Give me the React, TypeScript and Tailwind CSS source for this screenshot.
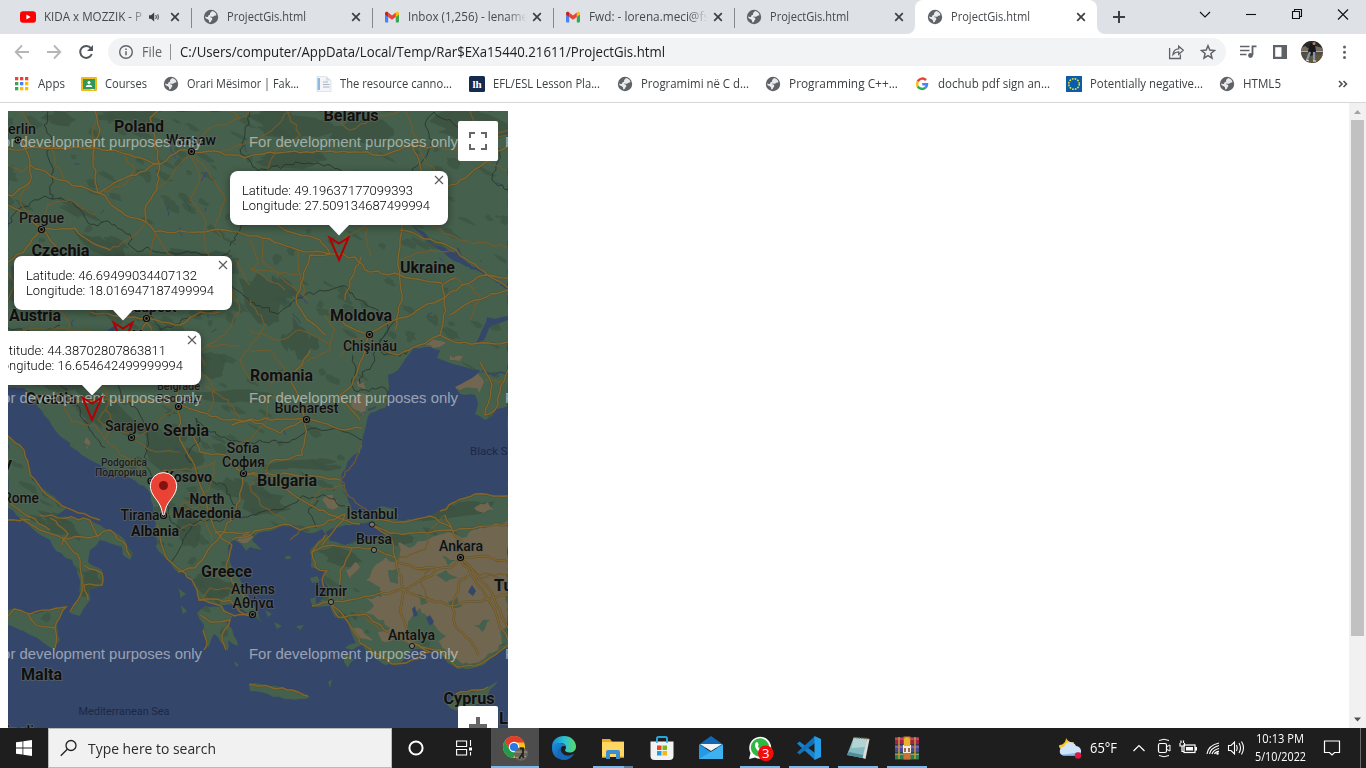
import React from 'react';

const UI = "font-['Open_Sans','Noto_Sans',sans-serif]";

/* ---------- small helpers ---------- */

function Fit({ w, children, className = '' }: { w: number; children: string; className?: string }) {
  // One line of text scaled horizontally to a known advance width
  const ref = React.useRef<HTMLSpanElement>(null);
  const [s, setS] = React.useState(1);
  React.useLayoutEffect(() => {
    const el = ref.current;
    if (el && el.offsetWidth) setS(w / el.getBoundingClientRect().width);
  }, []);
  return (
    <span className={`block shrink-0 ${className}`} style={{ width: w }}>
      <span ref={ref} className="inline-block origin-left whitespace-pre" style={{ transform: `scaleX(${s})` }}>{children}</span>
    </span>
  );
}

const Globe = () => (
  <svg viewBox="0 0 16 16" className="size-4 shrink-0">
    <circle cx="8" cy="8" r="7.2" fill="#5f6368" />
    <path d="M8.8 1.9c1.6.2 3.2 1.1 4.1 2.5.4.8.6 1.4.4 1.8-.7.1-1 .7-1.9.5-.7-.1-.6.9-1.3 1.1-.8.2-1.6-.5-2.5-.4-.6.2-.3.9.4 1 .9 0 1.400.7 1.300 1.700-.2 1-1 1.300-1.200 2.200-.1.700-.9 1.300-1.500 1.200-.8-.5-.3-1.700-.9-2.500-.6-.8-2.200-.9-2.900-1.700-.5-.6-.9-1.100-.9-1.700 1 .4 1.900.7 2.800.3.8-.4.300-1.200 1.100-1.600.9-.4 1.500-.7 1.300-1.500-.2-.9.400-1.300.900-1.600.5-.3.500-.8.800-1.300z" fill="#e9eaec" />
  </svg>
);

const Gmail = () => (
  <svg viewBox="0 0 16 16" className="size-4 shrink-0">
    <path d="M1 4.500v8.100c0 .5.400.900.900.900h2.300V7.500z" fill="#4285f4" />
    <path d="M15 4.500v8.100c0 .5-.4.900-.9.900h-2.300V7.500z" fill="#34a853" />
    <path d="M11.800 4v4L15 5.600V4.400c0-1.500-1.600-2.100-2.600-1.300z" fill="#fbbc04" />
    <path d="M4.200 8V3.600L8 6.400l3.800-2.800V8L8 10.800z" fill="#ea4335" />
    <path d="M1 4.400v1.200L4.200 8V3.600l-.6-.5C2.600 2.300 1 2.900 1 4.400z" fill="#c5221f" />
  </svg>
);

const Youtube = () => (
  <svg viewBox="0 0 16 16" className="size-4 shrink-0">
    <rect x="0" y="2.300" width="16" height="11.400" rx="3" fill="#f00" />
    <path d="M6.400 5.600v4.800L10.600 8z" fill="#fff" />
  </svg>
);

const Cross = () => (
  <svg viewBox="0 0 16 16" className="size-4 shrink-0">
    <path d="M4.200 4.200l7.600 7.600M11.800 4.200l-7.600 7.600" stroke="#3c4043" strokeWidth="1.700" />
  </svg>
);

const Speaker = () => (
  <svg viewBox="0 0 16 16" className="size-4 shrink-0">
    <path d="M3 6.300h2L8.200 3.500v9L5 9.700H3z" fill="#3c4043" />
    <path d="M9.800 6q1 2 0 4M11.800 5.300q1 2.700 0 5.400" fill="none" stroke="#3c4043" strokeWidth="1" />
  </svg>
);

/* ---------- browser chrome ---------- */

type TabInfo = { icon: React.ReactNode; title: string; w: number; fade?: boolean; sound?: boolean; active?: boolean; sep?: boolean };

const tabs: TabInfo[] = [
  { icon: <Youtube />, title: 'KIDA x MOZZIK - P', w: 98, fade: true, sound: true, sep: true },
  { icon: <Globe />, title: 'ProjectGis.html', w: 79, sep: true },
  { icon: <Gmail />, title: 'Inbox (1,256) - lename', w: 120, fade: true, sep: true },
  { icon: <Gmail />, title: 'Fwd: - lorena.meci@fs', w: 120, fade: true, sep: true },
  { icon: <Globe />, title: 'ProjectGis.html', w: 79 },
  { icon: <Globe />, title: 'ProjectGis.html', w: 79, active: true },
];

function Tab({ t }: { t: TabInfo }) {
  return (
    <div className={`relative flex h-[34px] shrink-0 items-center pl-3 ${t.sound ? 'w-[182.600px]' : t.active ? 'w-[182px]' : 'w-[181.100px]'} ${t.active ? 'rounded-t-lg bg-white' : ''}`}>
      {t.icon}
      <div className={`ml-2 flex min-w-0 flex-1 overflow-hidden ${t.fade ? (t.sound ? '[mask-image:linear-gradient(to_right,#000_82%,transparent_105%)]' : '[mask-image:linear-gradient(to_right,#000_82%,transparent_98%)]') : ''}`}>
        <Fit w={t.w} className="text-[12px] leading-4 text-[#45494d]">{t.title}</Fit>
      </div>
      {t.sound && <Speaker />}
      <div className={t.sound ? 'mr-[7.500px] ml-[5px]' : 'mr-[7.500px]'}><Cross /></div>
      {t.sep && <div className="absolute top-2 -right-px h-5 w-px bg-[#85888c]" />}
      {t.active && (
        <>
          <svg viewBox="0 0 8 8" className="absolute bottom-0 -left-2 size-2"><path d="M8 0v8H0a8 8 0 0 0 8-8z" fill="#fff" /></svg>
          <svg viewBox="0 0 8 8" className="absolute -right-2 bottom-0 size-2"><path d="M0 0v8h8a8 8 0 0 1-8-8z" fill="#fff" /></svg>
        </>
      )}
    </div>
  );
}

function TabStrip() {
  return (
    <div className="flex h-[34px] bg-[#dee1e6] pl-2">
      {tabs.map((t, i) => <Tab key={i} t={t} />)}
      <svg viewBox="0 0 28 34" className="ml-2 h-[34px] w-7"><path d="M14 11v12M8 17h12" stroke="#3c4043" strokeWidth="2" /></svg>
      <div className="flex-1" />
      <svg viewBox="0 0 184 34" className="h-[34px] w-[184px] shrink-0" fill="none" stroke="#111" strokeWidth="1.100">
        <path d="M18 12l5 5 5-5" />
        <path d="M64 14.500h10" />
        <path d="M110.500 11.500h7v7h-7zM112.500 11.500v-2h7v7h-2" />
        <path d="M156 9.500l10 10M166 9.500l-10 10" />
      </svg>
    </div>
  );
}

function Toolbar() {
  return (
    <div className="flex h-9 items-center bg-white">
      <svg viewBox="0 0 108 36" className="h-9 w-[108px] shrink-0" fill="none" stroke="#b4b6b8" strokeWidth="1.800">
        <path d="M29 18H16M22 11.500L15.700 18l6.300 6.500M47 18h13M54 11.500l6.300 6.500-6.300 6.500" />
        <path d="M91 14.300A6 6 0 1 0 91.800 20" stroke="#53575b" strokeWidth="2" />
        <path d="M93 11v6h-6z" fill="#53575b" stroke="none" />
      </svg>
      <div className="flex h-7 w-[1118px] items-center rounded-full bg-[#f1f3f4] pl-2.5">
        <svg viewBox="0 0 16 16" className="size-4"><circle cx="8" cy="8" r="6.300" fill="none" stroke="#5f6368" strokeWidth="1.400" /><path d="M8 7.200v4M8 4.600v1.500" stroke="#5f6368" strokeWidth="1.500" /></svg>
        <Fit w={20} className="ml-2 text-[14px] leading-5 text-[#5f6368]">File</Fit>
        <div className="mr-[9px] ml-2 h-4 w-px bg-[#8f9398]" />
        <Fit w={485} className="text-[14px] leading-5 text-[#202124]">C:/Users/computer/AppData/Local/Temp/Rar$EXa15440.21611/ProjectGis.html</Fit>
        <div className="flex-1" />
        <svg viewBox="0 0 60 28" className="h-7 w-[60px]" fill="none" stroke="#5f6368" strokeWidth="1.300">
          <path d="M3.600 10v10.500h10.800v-4" />
          <path d="M7 16.500c.4-3.800 2.600-5.600 5.700-5.700V8.200l4.600 4.100-4.600 4.100v-2.600c-2.300 0-4 .8-5.700 2.700z" />
          <path d="M42 7.800l1.800 4.300 4.700.4-3.600 3 1.100 4.600-4-2.500-4 2.500 1.100-4.600-3.600-3 4.700-.4z" strokeWidth="1.500" />
        </svg>
      </div>
      <svg viewBox="0 0 140 36" className="h-9 w-[140px] shrink-0">
        <path d="M14 12.500h9.500M14 16.500h9.500M14 20.500h6.500" stroke="#5f6368" strokeWidth="1.700" />
        <path d="M26.500 11.500v9.500M26.500 12.300h4" stroke="#5f6368" strokeWidth="1.800" />
        <circle cx="24.500" cy="21.500" r="2.400" fill="#5f6368" />
        <path d="M47 11h14v14H47zM49.200 13.200v9.600h6.300v-9.600z" fill="#5f6368" fillRule="evenodd" />
        <defs><clipPath id="av"><circle cx="86" cy="18" r="11" /></clipPath></defs>
        <g clipPath="url(#av)">
          <rect x="75" y="7" width="22" height="22" fill="#514c45" />
          <path d="M75 7h22v7H75z" fill="#2b2927" />
          <path d="M75 14l4-2 4 3 6-3 8 2v3H75z" fill="#726c62" />
          <path d="M75 17.500h22" stroke="#a7abb1" />
          <path d="M75 20l7 2-3 4 8 3h10v-8z" fill="#635639" />
          <path d="M84 11c0-3 5-3 5 0l1 6-2 4-5 1-1-5z" fill="#191718" />
          <circle cx="88" cy="9.500" r="1.500" fill="#b68368" />
          <path d="M84 18l-3 8M88 18v9" stroke="#8197b1" strokeWidth="2.200" />
          <path d="M80 26l3 1M87 27h3" stroke="#eee" />
        </g>
        <g fill="#5f6368"><circle cx="118.500" cy="13" r="1.500" /><circle cx="118.500" cy="18.200" r="1.500" /><circle cx="118.500" cy="23.400" r="1.500" /></g>
      </svg>
    </div>
  );
}

const AppsGrid = () => (
  <svg viewBox="0 0 16 16" className="size-4 shrink-0">
    {['#ea4335', '#ea4335', '#ea4335', '#34a853', '#4285f4', '#fbbc04', '#34a853', '#fbbc04', '#fbbc04'].map((c, i) => (
      <rect key={i} x={1 + (i % 3) * 5} y={1 + Math.floor(i / 3) * 5} width="3.300" height="3.300" fill={c} />
    ))}
  </svg>
);
const Classroom = () => (
  <svg viewBox="0 0 16 16" className="size-4 shrink-0">
    <rect y="1" width="16" height="14" rx="1" fill="#f5b912" />
    <rect x="2" y="3" width="12" height="10" fill="#2f9858" />
    <circle cx="8" cy="6.500" r="1.500" fill="#fff" /><path d="M4.800 11c0-3 6.400-3 6.400 0z" fill="#fff" />
    <path d="M9.500 13h3.500v1H9.500z" fill="#eee" />
  </svg>
);
const Doc = () => (
  <svg viewBox="0 0 16 16" className="size-4 shrink-0">
    <path d="M1 .5h9l5 4V15.500H1z" fill="#f3f5f8" stroke="#d6dae1" strokeWidth=".7" />
    <path d="M1.500 2h2.500v12H1.500z" fill="#8fb8e0" /><path d="M7 6h5M7 8.500h6.500M7 11h6.500" stroke="#a8b3c2" /><path d="M10 .5v4h5z" fill="#d9dee6" />
  </svg>
);
const Lh = () => (
  <svg viewBox="0 0 16 16" className="size-4 shrink-0">
    <rect width="16" height="16" rx="1.500" fill="#16294f" />
    <text x="8" y="12" textAnchor="middle" fontFamily="Liberation Serif, serif" fontWeight="700" fontSize="11" fill="#fff">lh</text>
  </svg>
);
const GoogleG = () => (
  <svg viewBox="0 0 16 16" className="size-4 shrink-0" fill="none" strokeWidth="2.500">
    <path d="M12 4.200A5 5 0 0 0 3.700 5.600" stroke="#ea4335" /><path d="M3.700 5.600a5 5 0 0 0 0 4.800" stroke="#fbbc04" />
    <path d="M3.700 10.400A5 5 0 0 0 11.400 11.600" stroke="#34a853" /><path d="M11.400 11.600A5 5 0 0 0 13 8.200H8.200" stroke="#4285f4" />
  </svg>
);
const EU = () => (
  <svg viewBox="0 0 16 16" className="size-4 shrink-0">
    <rect width="16" height="16" fill="#0b5cab" /><circle cx="8" cy="8" r="5.300" fill="none" stroke="#f0e52a" strokeWidth="1.500" strokeDasharray="1.700 1.075" />
  </svg>
);

const bookmarks: { icon: React.ReactNode; t: string; w: number; box: number }[] = [
  { icon: <AppsGrid />, t: 'Apps', w: 27, box: 67 },
  { icon: <Classroom />, t: 'Courses', w: 42, box: 82 },
  { icon: <Globe />, t: 'Orari Mësimor | Fak...', w: 112, box: 153 },
  { icon: <Doc />, t: 'The resource canno...', w: 112, box: 153 },
  { icon: <Lh />, t: 'EFL/ESL Lesson Pla...', w: 107, box: 148 },
  { icon: <Globe />, t: 'Programimi në C d...', w: 108, box: 148 },
  { icon: <Globe />, t: 'Programming C++...', w: 109, box: 149 },
  { icon: <GoogleG />, t: 'dochub pdf sign an...', w: 112, box: 152 },
  { icon: <EU />, t: 'Potentially negative...', w: 113, box: 153 },
  { icon: <Globe />, t: 'HTML5', w: 38, box: 80 },
];

function Bookmarks() {
  return (
    <div className="flex h-[33px] items-center border-b border-[#d5d7da] bg-white pb-1 pl-3.5">
      {bookmarks.map((b, i) => (
        <div key={i} className="flex shrink-0 items-center gap-2" style={{ width: b.box }}>
          {b.icon}
          <Fit w={b.w} className="text-[12px] leading-4 text-[#3c4043]">{b.t}</Fit>
        </div>
      ))}
      <div className="flex-1" />
      <svg viewBox="0 0 12 12" className="mr-[17px] size-3"><path d="M2 3l3 3-3 3M6.500 3l3 3-3 3" fill="none" stroke="#4c5054" strokeWidth="1.600" /></svg>
    </div>
  );
}

/* ---------- map ---------- */

let seed = 11;
const rnd = () => {
  seed = (seed * 16807) % 2147483647;
  return seed / 2147483647;
};

// Turns "x,y x,y" into a polyline with small natural wiggles
function wiggle(src: string, amp = 1.600, step = 9, close = false) {
  const p = src.trim().split(/\s+/).map((q) => q.split(',').map(Number));
  if (close) p.push(p[0]);
  let d = `M${p[0][0]} ${p[0][1]}`;
  for (let i = 1; i < p.length; i++) {
    const [x0, y0] = p[i - 1];
    const [x1, y1] = p[i];
    const n = Math.max(1, Math.round(Math.hypot(x1 - x0, y1 - y0) / step));
    for (let k = 1; k <= n; k++) {
      const j = k === n ? 0 : amp;
      d += `L${(x0 + ((x1 - x0) * k) / n + (rnd() - 0.5) * 2 * j).toFixed(1)} ${(y0 + ((y1 - y0) * k) / n + (rnd() - 0.5) * 2 * j).toFixed(1)}`;
    }
  }
  return d + (close ? 'Z' : '');
}

const landShapes = [
  // mainland with the Balkans, Thrace and Anatolia
  '8,111 508,111 508,648 495,653 485,664 468,669 458,669 448,663 440,655 428,648 412,650 400,664 385,665 372,655 362,645 352,650 345,648 356,643 352,635 345,620 335,617 330,606 312,606 320,602 330,590 322,578 327,571 311,567 310,550 318,541 326,535 322,529 313,533 306,533 294,525 282,526 270,531 258,533 252,540 262,550 250,547 246,551 240,543 234,540 228,548 230,562 236,576 246,588 250,600 258,612 261,622 252,616 246,612 236,606 225,605 210,604 198,598 195,588 190,577 176,571 166,559 156,547 155,520 153,505 148,490 130,478 105,468 82,455 60,436 44,415 36,402 24,388 8,388',
  // Peloponnese
  '197,613 205,606 222,607 233,617 226,622 232,629 238,646 228,640 228,651 218,637 214,634 208,648 203,633 204,625',
  // Italy
  '8,436 20,445 28,460 32,480 45,490 58,500 66,509 54,516 90,520 110,530 125,540 133,553 130,560 123,555 122,547 100,540 90,550 88,562 102,570 103,585 90,590 90,600 80,616 70,613 80,595 80,580 72,560 56,551 50,540 35,531 20,518 8,508',
  // Sicily
  '8,610 15,608 28,614 45,611 66,606 57,625 60,640 55,650 40,640 20,630 8,625',
  // Crete
  '249,683 262,684 280,687 300,692 310,697 300,699 285,699 268,694 250,691',
  // Cyprus
  '446,703 457,693 472,692 486,688 498,681 488,695 478,704 462,711 450,708',
  // Aegean islands
  '236,598 246,600 256,608 249,609 240,604', '286,556 291,556 290,559 285,559', '310,578 317,576 320,581 312,583', '310,599 316,597 316,607 312,605', '265,610 272,614 268,617', '274,622 282,626 277,629', '296,626 304,625 300,630', '345,653 354,660 348,668 344,662', '328,682 332,679 330,688', '178,588 186,594 180,598', '189,572 195,578 190,580', '181,605 187,611 183,614', '331,535 339,532 338,536', '234,661 239,665 236,667',
];

const waterShapes = [
  '414,348 425,347 440,350 437,358 450,363 465,367 480,370 472,378 455,387 460,394 475,395 478,405 475,414 485,420 493,416 496,409 508,406 508,496 475,494 462,498 448,506 430,516 415,520 395,520 375,519 352,512 348,500 341,479 347,463 362,448 365,430 370,413 385,408 389,400 388,375 398,370 406,358',
  '476,343 481,332 486,322 487,317 495,319 508,316 508,320 497,324 490,326 484,340',
  '326,532 340,527 357,523 370,522 384,530 385,535 372,540 357,541 345,545 330,541',
  '437,245 448,250 456,252 458,247 461,257 472,266 467,267 454,261 443,252',
  '468,265 480,268 490,276 500,283 497,283 482,273 470,269',
  '412,225 424,232 430,239 424,237 414,228',
  '468,592 472,585 476,591 473,596', '412,609 415,606 418,615 414,617', '426,618 430,615 434,622 430,626',
  '106,332 116,325 117,327 108,335',
];

const sand = [
  '372,570 386,557 394,562 400,553 398,543 410,548 424,541 432,537 448,532 462,538 472,530 490,526 508,520 508,642 498,650 482,660 470,664 458,660 446,650 440,643 425,640 410,644 398,637 386,642 378,632 390,628 384,620 365,613 374,606 366,598 382,597 376,585 366,580',
  '346,570 356,562 360,567 350,578', '350,625 362,629 373,640 360,638', '425,345 433,339 446,343 440,347', '450,355 463,356 460,361 450,360', '452,388 468,378 478,374 484,382 479,393 472,388 460,390',
  '352,400 362,393 367,400 362,416 354,409', '356,380 365,382 366,390 358,387', '322,500 333,495 338,507 328,508', '238,537 246,531 254,537 247,543 238,541', '86,437 90,445 87,449', '474,508 488,502 494,510 484,513',
];

// greener patches inside the dry plateau
const oases = ['408,622 420,608 432,622 446,636 438,642 420,640 408,634', '436,575 446,570 458,578 446,582', '388,570 400,568 398,584 390,582', '474,625 490,620 482,632', '442,556 456,560 448,566', '448,602 458,598 462,606 452,608', '500,632 508,626 508,642 502,644', '418,594 428,603 421,605'];

const borders = [
  '48,111 44,125 52,138 47,155 53,172 50,190 52,200', '8,224 20,208 38,200 45,196 54,199 72,201 78,208 84,216 88,223 98,226 108,221 122,230 132,239 128,244 138,252 148,247 156,252', '156,252 175,254 195,252 215,258 230,250', '230,246 240,230 250,216', '250,111 244,140 240,150 258,171 300,163 330,165 342,171',
  '412,171 425,158 432,140 425,125 434,112 455,125 470,128 480,140 500,150 496,170 492,180 508,190', '150,310 160,330 190,318 215,310 232,286 250,302 278,314 298,298 320,290 345,286 360,300 378,310 388,330 375,350 372,365 362,372 360,384', '352,355 356,370 352,385 358,392 385,388 388,398', '60,385 75,398 80,415 100,442 105,448', '118,385 122,400 138,410 148,440 145,465', '196,418 210,432 240,442 290,442 308,430 340,430 362,440', '196,418 200,440 186,455 200,478 225,485 238,510 232,520', '180,548 190,530 200,520 232,520 255,515 290,505 300,498 325,495 345,506', '172,563 178,552 180,548', '318,500 308,512 316,528', '8,328 40,334 60,325', '395,320 380,340 384,355 400,356 408,350', '145,465 155,480 165,500 170,520 185,530',
];

const mainRoads = [
  '8,149 60,148 110,150 135,157 160,164 180,150 191,152 220,152 245,158 270,152 330,151 355,152 385,155 410,145 432,147',
  '158,111 150,118 155,140 159,163 157,190 146,205 146,222 155,232 205,232 225,230 250,236 262,238 298,250 330,254',
  '30,165 60,180 99,193 125,215 146,222', '22,140 30,165 30,182 12,196 8,195', '8,262 14,258 30,244 41,229 75,228 88,240 110,250',
  '41,229 25,212 8,205', '41,229 50,240 60,250', '99,193 120,180 140,172 159,163', '95,111 100,130 94,142 93,160 98,193',
  '146,318 120,316 90,312', '146,318 180,325 200,312 220,312', '146,318 158,345 178,380 178,405', '146,318 140,340 105,370', '178,405 200,412 228,420 306,419',
  '178,405 180,440 196,470 205,500 215,530 232,545', '306,419 345,430 362,428', '306,419 304,445 302,455 270,462', '306,419 298,395 290,380 302,365 310,350', '306,419 280,433 250,420 232,425',
  '243,473 270,478 310,505 335,516 360,524', '243,473 225,455 200,452 190,430', '243,473 240,500 230,520', '243,473 290,474 340,480', '369,334 375,345 398,355 410,350', '369,334 345,325 330,308', '369,334 352,385 340,395 360,420', '369,334 400,318 440,300 462,285 485,275 508,278',
  '408,351 440,335 460,343 495,344 508,342', '440,335 446,310 442,285 455,278', '330,254 310,255 296,300 304,315 325,335', '330,254 355,257 365,270 400,275 442,283',
  '361,257 350,280 345,300', '450,315 475,300 508,290', '508,288 470,262 450,247 430,239 400,230', '445,188 460,180 490,160 508,145', '412,145 425,180 430,195', '262,218 290,232 320,240 330,254', '402,225 398,260 402,295 395,330',
  '480,362 492,385 485,415 495,410 500,392 508,370',
  '157,525 165,555 180,570 192,580 200,600 215,604', '232,520 212,545 195,568 178,572', '232,545 226,570 238,590 250,605', '232,540 260,530 285,524 300,530 325,524 345,514', '215,533 250,532',
  '215,604 235,616 250,613', '200,615 210,622 230,620 222,635 226,650', '203,630 207,645 204,650', '252,616 240,612 230,600 198,600',
  '8,436 24,450 30,475 42,490 62,506 100,520', '20,518 40,530 62,538 80,560 82,585 78,600 70,612', '62,538 88,538 110,530 126,545 130,556', '50,518 68,534 62,545', '84,565 102,573 102,585 84,585 88,600', '40,515 90,520 98,538', '8,500 28,516 50,530', '8,616 14,609 30,614 50,610 66,607 55,628 55,648', '28,614 36,625 55,628', '8,520 30,520',
  '371,524 390,533 410,533 450,530 508,524', '371,525 392,540 396,560 415,568 450,568 460,558', '325,535 312,552 326,546 352,548 374,549 395,558', '312,552 315,567 327,571 322,580 331,602', '331,602 312,606', '331,602 370,596 405,590 440,568', '331,602 338,617 365,614 384,630 408,641', '331,602 348,622 360,643 378,654 392,664 406,663 430,652 412,643 440,650 457,667 480,664 508,645', '352,548 340,570 342,600',
  '396,560 404,590 400,610 412,642', '404,590 430,600 452,606 508,595', '460,558 475,580 495,610 500,628 508,640', '460,558 490,590 504,620 508,628', '460,558 480,556 508,562', '452,606 455,625 470,640 478,655', '452,606 460,580 468,575', '460,558 465,545 452,530 445,515', '440,511 455,502 475,494 508,496', '375,520 405,522 430,516 452,528',
  '249,685 270,687 298,692 308,696', '456,694 478,690 488,687', '345,514 338,525 322,545',
];

const minorRoads = [
  '98,111 92,132 95,160', '120,150 135,170 125,185 99,193', '191,152 200,180 190,200 205,220 203,232 210,260', '191,152 215,180 225,200 215,225 222,240', '191,152 175,170 155,192', '191,152 210,128 240,118 250,111', '220,152 260,140 290,112', '287,111 300,135 275,150 268,170', '330,111 350,130 370,120 400,111', '405,111 415,135 425,160 440,180', '432,147 460,150 508,135', '262,238 262,260 290,285 310,300',
  '298,250 300,280 306,298', '250,240 258,262 252,270 285,290', '250,268 300,275', '342,240 365,225 370,256', '400,225 430,225 460,240 508,247', '398,260 430,250 455,252', '455,278 480,295 470,320', '250,330 280,340 300,330 330,345', '250,352 270,350 285,370 270,385', '250,300 265,325 250,345 240,360 250,380', '232,290 240,310 225,335 200,350 205,365', '300,365 330,350 335,330 325,315',
  '250,402 270,395 290,400', '265,395 268,420 250,440 232,450', '270,462 265,475 250,485 260,505 285,520', '200,370 215,390 208,412', '205,345 240,345', '205,385 228,400 240,420', '55,392 65,410 72,422 95,425 110,445 145,470', '100,385 110,400 98,420 110,430 104,440', '60,400 85,402 130,400 178,405', '131,437 115,425 106,410', '131,437 150,430 165,415 178,405', '131,437 150,450 180,452', '150,481 165,470 190,470', '190,470 215,462 210,485 200,500 180,505', '163,515 180,512 200,505 220,512', '212,540 205,520 180,530', '200,600 210,588 225,588 238,592', '238,592 225,600',
  '8,272 14,285 8,300', '8,340 30,328 90,330', '60,310 70,325 60,345', '8,165 22,172 30,165', '52,148 55,165 75,190', '30,182 20,200 41,229', '41,229 48,205 70,200 95,215', '110,250 135,235 146,222', '155,232 150,260 140,280 146,318', '155,232 170,255 190,265 220,260', '210,260 225,280 212,300 200,312', '236,260 250,285',
  '445,515 430,530 425,550 396,560', '508,575 480,575 460,558', '430,600 420,580 430,570 415,568', '384,630 370,622 360,610', '475,580 490,575 508,585', '300,530 290,540', '340,480 355,462 362,445', '340,480 350,497 372,515', '310,505 320,490 345,485', '485,380 508,382', '340,356 350,340 369,334', '240,118 230,111', '20,111 30,125 22,140', '22,140 45,148 60,148', '470,111 480,135 508,130', '478,153 492,165 508,170',
];

const labels: { t: string; x: number; y: number; w: number; s: number; b?: boolean; a?: 'start' }[] = [
  { t: 'Poland', x: 139, y: 131.500, w: 50, s: 16, b: true }, { t: 'Belarus', x: 351, y: 120.500, w: 55, s: 16, b: true }, { t: 'Warsaw', x: 191, y: 145, w: 50, s: 14 },
  { t: 'Berlin', x: 17.500, y: 134, w: 37, s: 14 }, { t: 'Prague', x: 41.500, y: 223, w: 45, s: 14 }, { t: 'Czechia', x: 60.500, y: 255.500, w: 58, s: 16, b: true },
  { t: 'Ukraine', x: 427.500, y: 272.500, w: 55, s: 16, b: true }, { t: 'Austria', x: 35, y: 320.500, w: 52, s: 16, b: true }, { t: 'Budapest', x: 146.500, y: 312, w: 60, s: 14 }, { t: 'Hungary', x: 132, y: 341.500, w: 58, s: 16, b: true, a: 'start' },
  { t: 'Moldova', x: 361, y: 320.500, w: 62, s: 16, b: true }, { t: 'Chişinău', x: 370, y: 351, w: 54, s: 14 }, { t: 'Romania', x: 281.500, y: 380.500, w: 63, s: 16, b: true }, { t: 'Bucharest', x: 306.500, y: 413, w: 64, s: 14 },
  { t: 'Croatia', x: 51, y: 403.500, w: 51, s: 16, b: true }, { t: 'Belgrade', x: 178.500, y: 390, w: 43, s: 11 }, { t: 'Београд', x: 178.500, y: 402, w: 44, s: 11 },
  { t: 'Sarajevo', x: 132, y: 431, w: 54, s: 14 }, { t: 'Serbia', x: 186, y: 435.500, w: 46, s: 16, b: true }, { t: 'Sofia', x: 243, y: 453, w: 33, s: 14 }, { t: 'София', x: 243.500, y: 467, w: 43, s: 14 }, { t: 'Bulgaria', x: 287, y: 486, w: 60, s: 16, b: true },
  { t: 'Podgorica', x: 124, y: 466, w: 46, s: 11 }, { t: 'Подгорица', x: 121, y: 476, w: 52, s: 11 }, { t: 'Kosovo', x: 188.500, y: 481.500, w: 47, s: 14, b: true }, { t: 'North', x: 207, y: 504, w: 35, s: 14, b: true }, { t: 'Macedonia', x: 207, y: 518, w: 69, s: 14, b: true },
  { t: 'Tirana', x: 140, y: 520, w: 39, s: 14 }, { t: 'Albania', x: 155, y: 536, w: 48, s: 14, b: true }, { t: 'Greece', x: 226.500, y: 577, w: 51, s: 16, b: true }, { t: 'Athens', x: 253, y: 594, w: 44, s: 14 }, { t: 'Αθήνα', x: 253, y: 608, w: 41, s: 14 },
  { t: 'İstanbul', x: 372, y: 519, w: 51, s: 14 }, { t: 'Bursa', x: 374, y: 544, w: 36, s: 14 }, { t: 'Ankara', x: 461, y: 551, w: 44, s: 14 }, { t: 'İzmir', x: 331, y: 596, w: 32, s: 14 }, { t: 'Antalya', x: 411.500, y: 640, w: 47, s: 14 },
  { t: 'Turkey', x: 494, y: 591, w: 50, s: 16, b: true, a: 'start' }, { t: 'Malta', x: 41.500, y: 680, w: 41, s: 16, b: true }, { t: 'Cyprus', x: 469, y: 704, w: 51, s: 16, b: true }, { t: 'Lebanon', x: 499, y: 723.500, w: 63, s: 16, b: true, a: 'start' },
  { t: 'Tripoli', x: -7, y: 736, w: 41, s: 14, a: 'start' }, { t: 'Rome', x: 21, y: 503, w: 36, s: 14 }, { t: 'Italy', x: -22, y: 469, w: 34, s: 16, b: true, a: 'start' },
];

const capitals = ['18,140', '191.5,151.5', '41.5,229.5', '146.5,318.5', '369.5,334.5', '306.5,419.5', '178.5,406.5', '131.5,437.5', '243.5,473.5', '151,481', '163.5,515.5', '252.5,614.5', '460.5,557.5'];
const cities = ['372,524.5', '374,550', '331,602', '412,646'];

const landPaths = landShapes.map((s) => wiggle(s, 1.200, 6, true));
const waterPaths = waterShapes.map((s) => wiggle(s, 1, 6, true));
const sandPaths = sand.map((s) => wiggle(s, 2.500, 5, true));
const oasisPaths = oases.map((s) => wiggle(s, 2, 5, true));
const borderPaths = borders.map((s) => wiggle(s, 2, 4));
const mainPaths = mainRoads.map((s) => wiggle(s, 1.500, 6));
const minorPaths = minorRoads.map((s) => wiggle(s, 1.800, 5));

function blob(cx: number, cy: number, rx: number, ry: number, tilt: number) {
  const n = 11;
  let d = '';
  for (let i = 0; i < n; i++) {
    const a = (i / n) * Math.PI * 2;
    const r = 0.55 + rnd() * 0.6;
    const x = Math.cos(a) * rx * r;
    const y = Math.sin(a) * ry * r;
    d += `${i ? 'L' : 'M'}${(cx + x * Math.cos(tilt) - y * Math.sin(tilt)).toFixed(1)} ${(cy + x * Math.sin(tilt) + y * Math.cos(tilt)).toFixed(1)}`;
  }
  return d + 'Z';
}

let woods = '';
for (let i = 0; i < 330; i++) {
  const y = 111 + rnd() * 540;
  woods += blob(8 + rnd() * 500, y, 3 + rnd() * 9, 1.500 + rnd() * 4, 0.500);
}
// [cx, cy, rx, ry, tilt] of the big mountain forests
const ranges: number[][] = [[45, 365, 55, 22, 0.1], [35, 280, 40, 20, 0], [100, 245, 30, 9, 0.4], [200, 262, 45, 14, 0.1], [262, 300, 35, 17, 0.9], [300, 340, 22, 10, 1.400], [238, 395, 40, 8, 0], [110, 412, 50, 16, 0.7], [165, 450, 34, 18, 0.7], [300, 464, 38, 6, 0], [262, 500, 30, 14, 0.1], [235, 490, 18, 10, 0.4], [60, 525, 26, 7, 0.5], [92, 582, 10, 14, 0], [215, 590, 20, 13, 0.4], [190, 530, 12, 22, -0.3], [450, 512, 50, 10, -0.1], [345, 558, 26, 9, 0.2], [300, 125, 50, 13, 0.1], [370, 130, 35, 12, 0], [470, 125, 38, 15, 0.2], [290, 160, 40, 8, 0], [400, 190, 40, 8, 0.2], [210, 365, 16, 14, 0.3], [402, 540, 18, 6, 0], [493, 640, 20, 5, -0.8], [345, 620, 12, 5, 1], [130, 115, 30, 7, 0], [60, 120, 20, 7, 0], [80, 210, 28, 4, 0.5]];
let mountains = '';
ranges.forEach(([x, y, rx, ry, t]) => {
  mountains += blob(x, y, rx, ry, t);
  for (let k = 0; k < 4; k++) mountains += blob(x + (rnd() - 0.500) * rx * 1.600, y + (rnd() - 0.500) * ry * 1.600, rx * 0.450, ry * 0.550, t);
});
let streams = '';
for (let i = 0; i < 34; i++) {
  const x = 15 + rnd() * 490;
  const y = 120 + rnd() * 330;
  streams += wiggle(`${x},${y} ${x + (rnd() - 0.500) * 14},${y + rnd() * 12}`, 2, 3);
}

function Arrow({ x, y }: { x: number; y: number }) {
  return <path d={`M${x - 9.500} ${y}L${x} ${y + 6}L${x + 9.500} ${y}L${x} ${y + 22.500}Z`} fill="none" stroke="#b40000" strokeWidth="2" />;
}

function MapCanvas() {
  return (
    <svg viewBox="8 111 500 617" className="block h-[617px] w-[500px]">
      <defs><clipPath id="land">{landPaths.map((d, i) => <path key={i} d={d} />)}</clipPath></defs>
      <rect x="8" y="111" width="500" height="617" fill="#34466a" />
      <g clipPath="url(#land)">
        <rect x="8" y="111" width="500" height="617" fill="#45604c" />
        <path d={woods} fill="#3e5745" />
        <path d={mountains} fill="#3b5141" opacity=".8" />
        {sandPaths.map((d, i) => <path key={i} d={d} fill="#716650" />)}
        {oasisPaths.map((d, i) => <path key={i} d={d} fill="#45604c" />)}
      </g>
      {waterPaths.map((d, i) => <path key={i} d={d} fill="#34466a" />)}
      <path d="M372 512l10 -6 12 3 5 7-10 4zM474 412l6 -4" fill="#45604c" />
      <path d={streams} fill="none" stroke="#33486f" />
      <path d="M424 237l15 12M500 284l8 5M482 371l12 4 6 -3 8 2M368 410l8 -3" stroke="#34466a" strokeWidth="1.500" fill="none" />
      <path d="M60 428l24 16 12 6M70 445l20 8M88 450l18 10 10 2M44 402l10 14" stroke="#45604c" strokeWidth="2.500" strokeDasharray="9 4" fill="none" />
      <g fill="none" stroke="#252e29" strokeWidth="1" opacity=".75">{borderPaths.map((d, i) => <path key={i} d={d} />)}</g>
      <g fill="none" stroke="#725b2c" strokeWidth="1.200">{minorPaths.map((d, i) => <path key={i} d={d} />)}</g>
      <g fill="none" stroke="#4c4a2c" strokeWidth="2.400" opacity=".6">{mainPaths.map((d, i) => <path key={i} d={d} />)}</g>
      <g fill="none" stroke="#84652c" strokeWidth="1.400">{mainPaths.map((d, i) => <path key={i} d={d} />)}</g>
      {capitals.map((c) => {
        const [x, y] = c.split(',').map(Number);
        return <g key={c}><circle cx={x} cy={y} r="3" fill="#6f716c" stroke="#080808" strokeWidth="1.200" /><circle cx={x} cy={y} r="1.400" fill="#050505" /></g>;
      })}
      {cities.map((c) => {
        const [x, y] = c.split(',').map(Number);
        return <circle key={c} cx={x} cy={y} r="2.600" fill="#77766c" stroke="#151515" strokeWidth="1" />;
      })}
      <g fontFamily="Roboto, sans-serif" fill="#0b0b0b" stroke="#616760" strokeWidth="2" strokeOpacity=".65" paintOrder="stroke" strokeLinejoin="round">
        {labels.map((l) => (
          <text key={l.t} x={l.a ? l.x : l.x - l.w / 2} y={l.y} fontSize={l.s} fontWeight={l.b ? 700 : 500} fillOpacity={l.s < 12 ? 0.8 : 0.95} textLength={l.w} lengthAdjust="spacingAndGlyphs">{l.t}</text>
        ))}
      </g>
      <g fontFamily="Roboto, sans-serif" fontSize="11" fill="#1c2846">
        <text x="470" y="454.500" textLength="50" lengthAdjust="spacingAndGlyphs">Black Sea</text>
        <text x="78.500" y="714.500" textLength="91" lengthAdjust="spacingAndGlyphs">Mediterranean Sea</text>
      </g>
      <g fontFamily="Liberation Sans, Arial, sans-serif" fontSize="15.500" fill="#fff" fillOpacity=".5">
        {[147, 403, 659].map((y) => [-7, 249, 505].map((x) => (
          <text key={`${x}-${y}`} x={x} y={y} textLength="209" lengthAdjust="spacingAndGlyphs">For development purposes only</text>
        )))}
      </g>
      <Arrow x={339} y={237.500} />
      <Arrow x={123} y={322.500} />
      <Arrow x={92} y={397.500} />
      <path d="M163.500 515c-.7 0-1-.6-1.100-1.300-1-8.500-4.500-11.700-8.300-17.200-2.300-3.300-3.800-7-3.800-10.700a13.200 13.200 0 0 1 26.400 0c0 3.700-1.500 7.400-3.800 10.700-3.800 5.500-7.300 8.700-8.300 17.200-.1.700-.4 1.300-1.100 1.300z" fill="#ea4335" stroke="#fff" strokeWidth="1" />
      <circle cx="163.500" cy="485.500" r="4.500" fill="#811411" />
    </svg>
  );
}

function InfoWindow({ lat, lng, place }: { lat: string; lng: string; place: string }) {
  return (
    <div className={`absolute w-[218px] rounded-lg bg-white font-['Roboto',sans-serif] text-[13px] font-light text-black shadow-[0_2px_7px_1px_rgba(0,0,0,0.3)] ${place}`}>
      <div className="flex h-[54px] flex-col pt-3 pl-3">
        <Fit w={171} className="h-[15px] leading-[15px]">{`Latitude: ${lat}`}</Fit>
        <Fit w={188} className="h-[15px] leading-[15px]">{`Longitude: ${lng}`}</Fit>
      </div>
      <svg viewBox="0 0 10 10" className="absolute top-1 right-1 size-[10px]"><path d="M1 1l8 8M9 1L1 9" stroke="#5c5c5c" strokeWidth="1.200" /></svg>
      <svg viewBox="0 0 24 12" className="absolute top-[53px] left-[97px] h-3 w-6"><path d="M1 0h22L12 11.500z" fill="#fff" /></svg>
    </div>
  );
}

function MapView() {
  return (
    <div className="relative h-[617px] w-[500px] overflow-hidden">
      <MapCanvas />
      <InfoWindow lat="49.19637177099393" lng="27.509134687499994" place="left-[222px] top-[60px]" />
      <InfoWindow lat="46.69499034407132" lng="18.016947187499994" place="left-[6px] top-[145px]" />
      <InfoWindow lat="44.38702807863811" lng="16.654642499999994" place="left-[-25px] top-[220px]" />
      <div className="absolute top-2.5 right-2.5 flex size-10 items-center justify-center rounded-xs bg-white">
        <svg viewBox="0 0 18 18" className="size-[18px]"><path d="M1 6V1h5M12 1h5v5M17 12v5h-5M6 17H1v-5" fill="none" stroke="#666" strokeWidth="2" /></svg>
      </div>
      <div className="absolute right-2.5 -bottom-[18px] flex size-10 items-center justify-center rounded-xs bg-white">
        <svg viewBox="0 0 18 18" className="size-[18px]"><path d="M9 0v18M0 9h18" stroke="#666" strokeWidth="4" /></svg>
      </div>
    </div>
  );
}

function Scrollbar() {
  return (
    <div className="flex w-[17px] flex-col items-center bg-[#f1f1f1]">
      <svg viewBox="0 0 17 17" className="size-[17px] shrink-0"><path d="M5 11l3.500-4 3.500 4z" fill="#a3a3a3" /></svg>
      <div className="h-[516px] w-[13px] bg-[#c1c1c1]" />
      <div className="flex-1" />
      <svg viewBox="0 0 17 17" className="size-[17px] shrink-0"><path d="M5 6.500l3.500 4 3.500-4z" fill="#505050" /></svg>
    </div>
  );
}

/* ---------- taskbar ---------- */

const ChromeIcon = () => (
  <svg viewBox="0 0 26 26" className="size-[26px]">
    <circle cx="12" cy="12" r="11" fill="#fbc116" />
    <path d="M2.500 6.500a11 11 0 0 1 19.600 1.100H12L8 14.500z" fill="#e33b2e" /><path d="M2.500 6.500A11 11 0 0 0 11 23l5-8.500H8z" fill="#229a4b" />
    <circle cx="12" cy="12" r="5.200" fill="#fff" /><circle cx="12" cy="12" r="4.100" fill="#2877e6" />
    <circle cx="19" cy="19" r="6.800" fill="#6b665b" /><path d="M12.500 17h13M14 22.500l10-1" stroke="#a59d8a" /><path d="M18 13.500h3v5l-4 5M20 18l1.500 5" stroke="#211f1e" strokeWidth="1.800" fill="none" />
  </svg>
);
const EdgeIcon = () => (
  <svg viewBox="0 0 26 26" className="size-[26px]">
    <defs>
      <linearGradient id="e1" x1="0" x2="1"><stop stopColor="#168bd6" /><stop offset=".55" stopColor="#2cc3cf" /><stop offset="1" stopColor="#5dda65" /></linearGradient>
      <linearGradient id="e2" x1="0" y1="0" x2="1" y2="1"><stop stopColor="#1d8ee0" /><stop offset="1" stopColor="#114a92" /></linearGradient>
    </defs>
    <path d="M1 12C1 5 6 1 13 1c7 0 12 5 12 10.500 0 4-3 6-6.500 6-3 0-4.500-1-4.500-2.200 0-.9 1-1.100 1-3C15 10 12.500 8 9.500 8 5 8 2 10.500 1 14z" fill="url(#e1)" />
    <path d="M1 13.500C1.500 10 5 8 9 8c3 0 5.500 1.500 6 3.500-4-1.500-6 1-5 4.500 1.300 4.500 7.500 6 13 2.500C21 22.500 17.500 25 13 25 6 25 1 20 1 13.500z" fill="url(#e2)" />
    <path d="M9.500 24C5 20 6 14 10 12c-1 4 0 8.500 5.500 9.500 2.500.5 5.500-.5 7.500-2.500C20 24 14 26 9.500 24z" fill="#1768b8" />
  </svg>
);
const ExplorerIcon = () => (
  <svg viewBox="0 0 26 26" className="size-[26px]">
    <path d="M2 4h8l2 2.500h12V21H2z" fill="#eda922" /><path d="M2 7h22v15H2z" fill="#fdd663" />
    <path d="M6 24v-7q0-2 2-2h10q2 0 2 2v7h-4v-5h-6v5z" fill="#3b8fcf" /><path d="M2 22h4M20 22h4" stroke="#e9b632" strokeWidth="1.500" />
  </svg>
);
const StoreIcon = () => (
  <svg viewBox="0 0 26 26" className="size-[26px]">
    <path d="M8 8V3.500q0-1.500 1.500-1.500h7Q18 2 18 3.500V8" fill="none" stroke="#28a6da" strokeWidth="2" />
    <path d="M1.500 6.500h23V21q0 4-4 4h-15q-4 0-4-4z" fill="#f1f2f3" /><path d="M8 6v2M18 6v2" stroke="#28a6da" strokeWidth="1.500" />
    <path d="M8 10.500h4.500V15H8z" fill="#e54822" /><path d="M13.500 10.500H18V15h-4.500z" fill="#7db713" /><path d="M8 16h4.500v4.500H8z" fill="#1a9fe2" /><path d="M13.500 16H18v4.500h-4.500z" fill="#f4b611" />
  </svg>
);
const MailIcon = () => (
  <svg viewBox="0 0 26 26" className="size-[26px]">
    <path d="M1 9.500L13 1l12 8.500V13H1z" fill="#1267b4" /><path d="M1 9.500L13 17l12-7.500V24H1z" fill="#249ae5" /><path d="M25 9.500V24H1z" fill="#45b8f3" opacity=".8" /><path d="M2 9h22L13 16z" fill="#f2f3f5" />
  </svg>
);
const WhatsappIcon = () => (
  <svg viewBox="0 0 26 26" className="size-[26px] overflow-visible">
    <path d="M2 24l1.500-6A11 11 0 1 1 8 22.500z" fill="#fff" /><circle cx="13" cy="12.500" r="9.200" fill="#2fb943" />
    <path d="M8.500 8c1.500-2 2.500-.5 3 1.500.2 1-.8 1.500-.5 2 1 2 2.300 3 4 3.500.6-.2 1-1.500 1.800-1.300 1.500.6 2.700 1.300 2 2.700-1 2-4 2-6.500.5C9 14.500 7 11 8.500 8z" fill="#fff" />
    <circle cx="18.800" cy="18.300" r="7.900" fill="#f00d0d" /><text x="18.800" y="22.800" textAnchor="middle" fontFamily="Open Sans, sans-serif" fontSize="13" fill="#fff">3</text>
  </svg>
);
const CodeIcon = () => (
  <svg viewBox="0 0 26 26" className="size-[26px]">
    <path d="M1 8.500L3.500 6.500 19 18v7z" fill="#1783ce" /><path d="M1 17.500L3.500 19.500 19 8V1z" fill="#1172b8" /><path d="M18.500 1L25 4v18l-6.500 3z" fill="#269de8" />
  </svg>
);
const NotepadIcon = () => (
  <svg viewBox="0 0 26 26" className="size-[26px]">
    <path d="M9 2.500L24.500 4l-4 20-3-1z" fill="#d9dedb" /><path d="M8.500 3l13.500 1-4.500 19L2 20z" fill="#86bac1" /><path d="M8.500 3L22 4l-2 8-13.500 1z" fill="#b3d4d4" /><path d="M2 20l15.500 3 .8-3L4 17z" fill="#4f8f9a" /><path d="M8.500 2.500l15.500 1.300" stroke="#746b58" strokeWidth="1.500" strokeDasharray="1.500 1" />
  </svg>
);
const RarIcon = () => (
  <svg viewBox="0 0 26 26" className="size-[26px]">
    <rect x="1" y="2" width="24" height="7" fill="#a52144" /><rect x="1" y="9.500" width="24" height="7.500" fill="#4c489b" /><rect x="1" y="17.500" width="24" height="7" fill="#24804c" />
    <path d="M1 4h24M1 12h24M1 19.500h24" stroke="#dfa6ae" opacity=".6" /><path d="M5 2v22M21 2v22" stroke="#c69838" strokeWidth="1.500" />
    <rect x="9.500" y="1.500" width="7" height="23" fill="#cc7334" /><rect x="9" y="10" width="8" height="8" fill="#f0eadf" /><path d="M10 4q3-4 6 0v7h-6z" fill="#e8b429" /><path d="M11 13v4M15 13v4" stroke="#7d3e25" strokeWidth="1.500" />
  </svg>
);

const apps: { icon: React.ReactNode; bar: string; active?: boolean }[] = [
  { icon: <ChromeIcon />, bar: 'w-12', active: true },
  { icon: <EdgeIcon />, bar: 'hidden' },
  { icon: <ExplorerIcon />, bar: 'w-10 bg-[linear-gradient(to_right,#76b9ed_31px,#557f9e_31px)]' },
  { icon: <StoreIcon />, bar: 'hidden' },
  { icon: <MailIcon />, bar: 'hidden' },
  { icon: <WhatsappIcon />, bar: 'w-10' },
  { icon: <CodeIcon />, bar: 'w-10' },
  { icon: <NotepadIcon />, bar: 'w-10' },
  { icon: <RarIcon />, bar: 'w-10' },
];

function Taskbar() {
  return (
    <div className="flex h-10 bg-[#1e1e1e] text-white">
      <div className="flex w-12 items-center justify-center">
        <svg viewBox="0 0 16 16" className="size-4"><path d="M0 2.300l6.500-.9v6.100H0zM7.300 1.300L16 0v7.500H7.300zM0 8.500h6.500v6.100L0 13.700zM7.300 8.500H16V16l-8.700-1.200z" fill="#fff" /></svg>
      </div>
      <div className="flex w-[344px] items-center border border-[#b9b9b9] bg-[#f1f1f1] pl-[11px]">
        <svg viewBox="0 0 18 18" className="size-[18px]"><circle cx="11" cy="6.500" r="5" fill="none" stroke="#222" strokeWidth="1.300" /><path d="M7.300 10.300L.8 16.800" stroke="#222" strokeWidth="1.300" /></svg>
        <Fit w={128} className="ml-2.5 text-[15px] leading-5 text-[#2b2b2b]">Type here to search</Fit>
      </div>
      <div className="flex w-12 items-center justify-center">
        <svg viewBox="0 0 16 16" className="size-4"><circle cx="8" cy="8" r="6.600" fill="none" stroke="#fff" strokeWidth="2" /></svg>
      </div>
      <div className="flex w-[51px] items-center pl-4">
        <svg viewBox="0 0 16 16" className="size-4" fill="none" stroke="#fff" strokeWidth="1.100"><path d="M.6 1h10v5.500H.6zM.6 9.500h10V15H.6zM14.500 0v6M14.500 12v3.500" /><path d="M13 7.500h3v3h-3z" fill="#fff" stroke="none" /></svg>
      </div>
      <div className="flex">
        {apps.map((a, i) => (
          <div key={i} className={`relative mr-px flex w-12 items-center justify-center ${a.active ? 'bg-[#4d4d4d]' : ''}`}>
            {a.icon}
            <div className={`absolute bottom-0 h-0.5 bg-[#76b9ed] ${a.bar}`} />
          </div>
        ))}
      </div>
      <div className="flex-1" />
      <div className="flex w-[308px] shrink-0 items-center">
        <svg viewBox="0 0 26 26" className="size-[26px] shrink-0">
          <path d="M8 3c1.500 3 4.500 5 8 4l-4 9-9-2C0 12 1 10 2 10c3 0 6-3 6-7z" fill="#f9c62b" />
          <path d="M5 20.500a4.500 4.500 0 0 1 1-8.800A6.500 6.500 0 0 1 18 11c4 .5 5.500 3.500 5 6-.4 2-2 3.500-4 3.500z" fill="#cfe4f7" /><path d="M3 19c5 1 11-1 20-2-.5 2-2 3.500-4 3.500H6z" fill="#8dbde9" />
          <circle cx="20" cy="20.500" r="3.200" fill="#e0173c" />
        </svg>
        <Fit w={27} className="ml-[6px] text-[14px] leading-5">65°F</Fit>
        <svg viewBox="0 0 136 40" className="ml-[7px] h-10 w-[136px] shrink-0" fill="none" stroke="#fff" strokeWidth="1.200">
          <path d="M9.500 23l5.500-5.500 5.500 5.500" />
          <rect x="34.500" y="15.500" width="8" height="9" rx="1.500" /><path d="M43 18.500l3-1.500v6l-3-1.500M35 12.500q5-2.500 10 0M35 27.500q5 2.500 10 0" strokeWidth="1" />
          <rect x="60" y="17" width="11" height="7.500" /><path d="M62 19h7v3.500h-7zM71 19h2v3.500h-2z" fill="#fff" stroke="none" /><path d="M56 15v3h4.500v-3M57 15v-2.500M59.500 15v-2.500M58 18v5.500h2" />
          <g strokeWidth="1.100"><path d="M83 26q1-8.500 12-11M85.500 26q1-6 9.500-8.500M88 26q1-4 7-5.500M90.500 26q.8-2.200 4.500-2.600" /><circle cx="93.500" cy="25.500" r=".7" fill="#fff" /></g>
          <path d="M104.500 17.500h2.500l3.500-3.500v12l-3.500-3.500h-2.500zM112.500 17q1.500 3 0 6M115 15q3 5 0 10M117.500 13.500q4 6.500 0 13" strokeWidth="1.100" />
        </svg>
        <div className="ml-[-10px] flex w-[60px] shrink-0 flex-col items-center text-[12px]">
          <Fit w={48} className="h-[18px] leading-[18px]">10:13 PM</Fit>
          <Fit w={51} className="h-[18px] leading-[18px]">5/10/2022</Fit>
        </div>
        <svg viewBox="0 0 18 18" className="ml-[13px] size-[18px] shrink-0"><path d="M1.500 2h15v11.500h-5L9 16l-2.500-2.500h-5z" fill="none" stroke="#fff" strokeWidth="1.200" /></svg>
        <div className="ml-[19px] h-10 w-px shrink-0 bg-[#6b6b6b]" />
      </div>
    </div>
  );
}

export default function App() {
  return (
    <div className={`flex h-[768px] w-[1366px] flex-col overflow-hidden bg-white ${UI}`}>
      <TabStrip />
      <Toolbar />
      <Bookmarks />
      <div className="flex h-[625px]">
        <main className="flex-1 pt-2 pl-2"><MapView /></main>
        <Scrollbar />
      </div>
      <Taskbar />
    </div>
  );
}
